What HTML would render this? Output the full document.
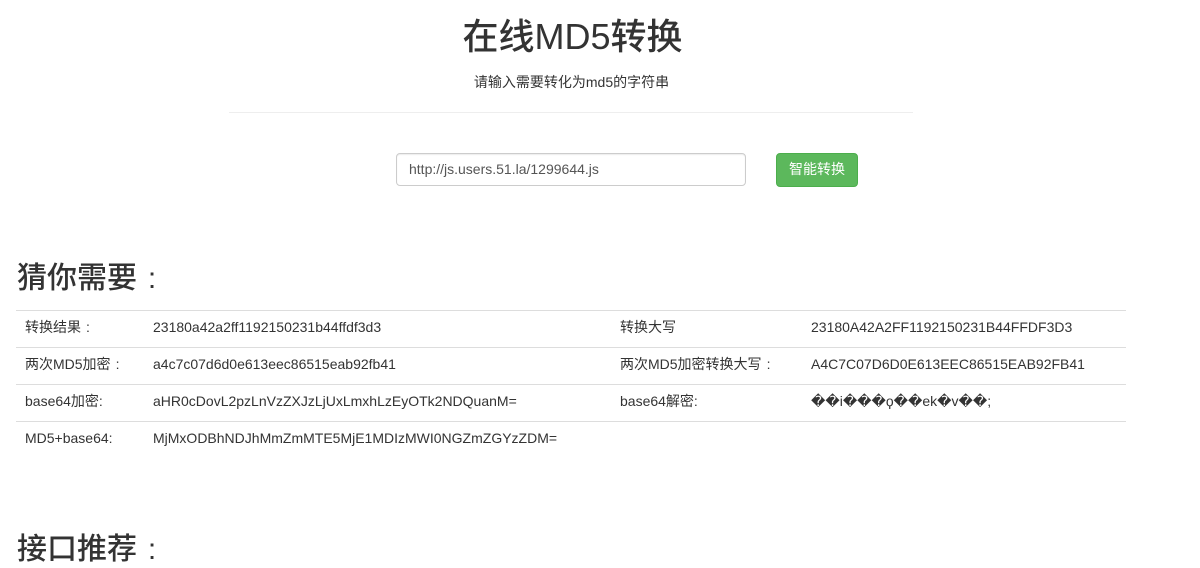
<!DOCTYPE html>
<html><head><meta charset="utf-8"><style>
body{margin:0;background:#fff;font-family:"Liberation Sans","Noto Sans CJK SC",sans-serif;color:#333;width:1200px;height:568px;overflow:hidden;position:relative}
.a{position:absolute}
.c{display:inline-block;width:1em;text-align:center}
h1{position:absolute;left:0;width:1145px;text-align:center;top:12px;margin:0;font-size:36px;font-weight:500;line-height:50px}
.sub{left:0;width:1143px;text-align:center;top:72px;font-size:14px}
.hr{left:229px;width:684px;top:112px;border-top:1px solid #eee}
.inp{left:396px;top:153px;width:350px;height:33px;border:1px solid #ccc;border-radius:4px;box-shadow:inset 0 1px 1px rgba(0,0,0,.075);box-sizing:border-box;font-size:14px;color:#555;padding:6px 12px;line-height:18px}
.btn{left:776px;top:153px;width:82px;height:34px;background:#5cb85c;border:1px solid #4cae4c;border-radius:4px;box-sizing:border-box;color:#fff;font-size:14px;text-align:center;line-height:30px}
h2{position:absolute;left:17px;margin:0;font-size:30px;font-weight:500;line-height:36px}
table{position:absolute;left:16px;top:310px;width:1110px;border-collapse:collapse;font-size:14px}
td{border-top:1px solid #ddd;padding:0 0 4px 9px;box-sizing:border-box;height:37px;vertical-align:middle}
</style></head><body>
<h1>在线MD5转换</h1>
<div class="a sub">请输入需要转化为md5的字符串</div>
<div class="a hr"></div>
<div class="a inp">http://js.users.51.la/1299644.js</div>
<div class="a btn">智能转换</div>
<h2 style="top:261px">猜你需要<span class="c">:</span></h2>
<table>
<tr><td style="width:128px">转换结果<span class="c">:</span></td><td style="width:467px">23180a42a2ff1192150231b44ffdf3d3</td><td style="width:191px">转换大写</td><td>23180A42A2FF1192150231B44FFDF3D3</td></tr>
<tr><td>两次MD5加密<span class="c">:</span></td><td>a4c7c07d6d0e613eec86515eab92fb41</td><td>两次MD5加密转换大写<span class="c">:</span></td><td>A4C7C07D6D0E613EEC86515EAB92FB41</td></tr>
<tr><td>base64加密:</td><td>aHR0cDovL2pzLnVzZXJzLjUxLmxhLzEyOTk2NDQuanM=</td><td>base64解密:</td><td>��i���ϙ��ek�v��;</td></tr>
<tr><td>MD5+base64:</td><td>MjMxODBhNDJhMmZmMTE5MjE1MDIzMWI0NGZmZGYzZDM=</td><td></td><td></td></tr>
</table>
<h2 style="top:532px">接口推荐<span class="c">:</span></h2>
</body></html>
